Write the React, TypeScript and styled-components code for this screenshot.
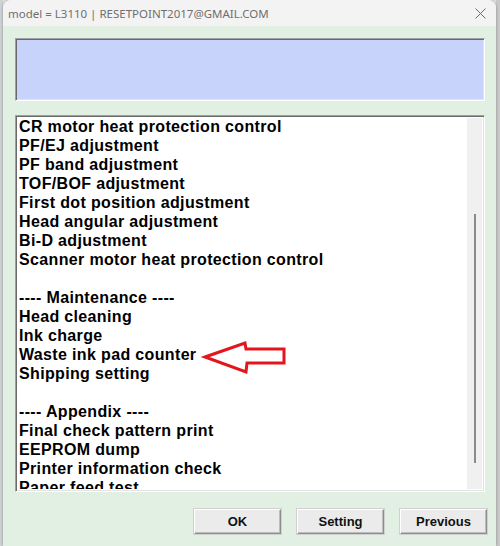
import React from "react";
import styled, { createGlobalStyle } from "styled-components";

const Global = createGlobalStyle`
  html, body { margin: 0; padding: 0; background: #d8d8d8; overflow: hidden; }
  #root { width: 500px; height: 546px; }
`;

const Desktop = styled.div`
  width: 500px;
  height: 546px;
  box-sizing: border-box;
  padding: 0 4px 0 3px;
  display: flex;
  background: linear-gradient(90deg, #cfd3d6 0, #cfd3d6 3px, #e2e2e2 3px, #e2e2e2 496px, #c9c9c9 496px);
`;

const Window = styled.div`
  flex: 1;
  display: flex;
  flex-direction: column;
  border-radius: 8px 8px 0 0;
  overflow: hidden;
  box-shadow: 0 0 3px rgba(0, 0, 0, 0.35);
  background: #e1f0e2;
`;

const TitleBar = styled.div`
  height: 26px;
  flex: none;
  display: flex;
  align-items: center;
  justify-content: space-between;
  padding: 0 6px 0 5px;
  background: #f3f3f3;
  font-family: "Noto Sans", "Open Sans", sans-serif;
  font-size: 11.5px;
  color: #6f6f6f;
`;

const Title = styled.span`
  white-space: nowrap;
`;

const CloseBox = styled.div`
  width: 16px;
  height: 16px;
  display: flex;
  align-items: center;
  justify-content: center;
  margin-right: 2px;
`;

const Client = styled.div`
  flex: 1;
  display: flex;
  flex-direction: column;
  padding: 12px 11px 0 12px;
`;

const Sunken = styled.div`
  box-sizing: border-box;
  border: 1px solid;
  border-color: #a0a0a0 #ffffff #ffffff #a0a0a0;
  box-shadow: inset 1px 1px 0 #6a6a6a, inset -1px -1px 0 #e3e3e3;
`;

const InfoBox = styled(Sunken)`
  height: 63px;
  background: #c8d3fc;
`;

const ListBox = styled(Sunken)`
  margin-top: 14px;
  height: 377px;
  background: #ffffff;
  display: flex;
  padding: 2px;
  overflow: hidden;
`;

const Items = styled.div`
  flex: 1;
  margin-top: -1px;
  padding-left: 1px;
  overflow: hidden;
  font-family: "Liberation Sans", Arial, sans-serif;
  font-weight: bold;
  font-size: 16px;
  letter-spacing: 0.35px;
  line-height: 19px;
  color: #000;
`;

const Item = styled.div`
  height: 19px;
  white-space: nowrap;
  position: relative;
`;

const Track = styled.div`
  width: 15px;
  flex: none;
  background: #f0f0f0;
  display: flex;
  justify-content: center;
`;

const Thumb = styled.div`
  margin-top: 96px;
  width: 2px;
  height: 249px;
  background: #8b8b8b;
  margin-left: 1px;
`;

const Arrow = styled.svg`
  position: absolute;
  left: 184px;
  top: -3px;
  overflow: visible;
`;

const Buttons = styled.div`
  margin-top: 17px;
  margin-right: -2px;
  display: flex;
  justify-content: flex-end;
  gap: 16px;
`;

const Button = styled.button`
  width: 87px;
  height: 25px;
  box-sizing: border-box;
  background: #ebebeb;
  border: 1px solid;
  border-color: #ffffff #8e8e8e #8e8e8e #ffffff;
  box-shadow: inset -1px -1px 0 #bdbdbd, 0 0 0 1px #d0d0d0;
  font-family: "Liberation Sans", Arial, sans-serif;
  font-weight: bold;
  font-size: 13px;
  color: #111;
  padding: 0;
`;

const items: string[] = [
  "CR motor heat protection control",
  "PF/EJ adjustment",
  "PF band adjustment",
  "TOF/BOF adjustment",
  "First dot position adjustment",
  "Head angular adjustment",
  "Bi-D adjustment",
  "Scanner motor heat protection control",
  "",
  "---- Maintenance ----",
  "Head cleaning",
  "Ink charge",
  "Waste ink pad counter",
  "Shipping setting",
  "",
  "---- Appendix ----",
  "Final check pattern print",
  "EEPROM dump",
  "Printer information check",
  "Paper feed test",
];

const RedArrow = () => (
  <Arrow width="84" height="34" viewBox="0 0 84 34">
    <polygon
      points="2,15 42,1 43,7 81,7 81,21 44,21 43,30"
      fill="none"
      stroke="#e3161d"
      strokeWidth="3"
      strokeLinejoin="miter"
    />
  </Arrow>
);

export default function App() {
  return (
    <>
      <Global />
      <Desktop>
        <Window>
          <TitleBar>
            <Title>model = L3110 | RESETPOINT2017@GMAIL.COM</Title>
            <CloseBox>
              <svg width="11" height="11" viewBox="0 0 11 11">
                <path d="M0.5 0.5 L10.5 10.5 M10.5 0.5 L0.5 10.5" stroke="#6a6a6a" strokeWidth="1" />
              </svg>
            </CloseBox>
          </TitleBar>
          <Client>
            <InfoBox />
            <ListBox>
              <Items>
                {items.map((t, i) => (
                  <Item key={i}>
                    {t || "\u00a0"}
                    {t === "Waste ink pad counter" && <RedArrow />}
                  </Item>
                ))}
              </Items>
              <Track>
                <Thumb />
              </Track>
            </ListBox>
            <Buttons>
              <Button>OK</Button>
              <Button>Setting</Button>
              <Button>Previous</Button>
            </Buttons>
          </Client>
        </Window>
      </Desktop>
    </>
  );
}
